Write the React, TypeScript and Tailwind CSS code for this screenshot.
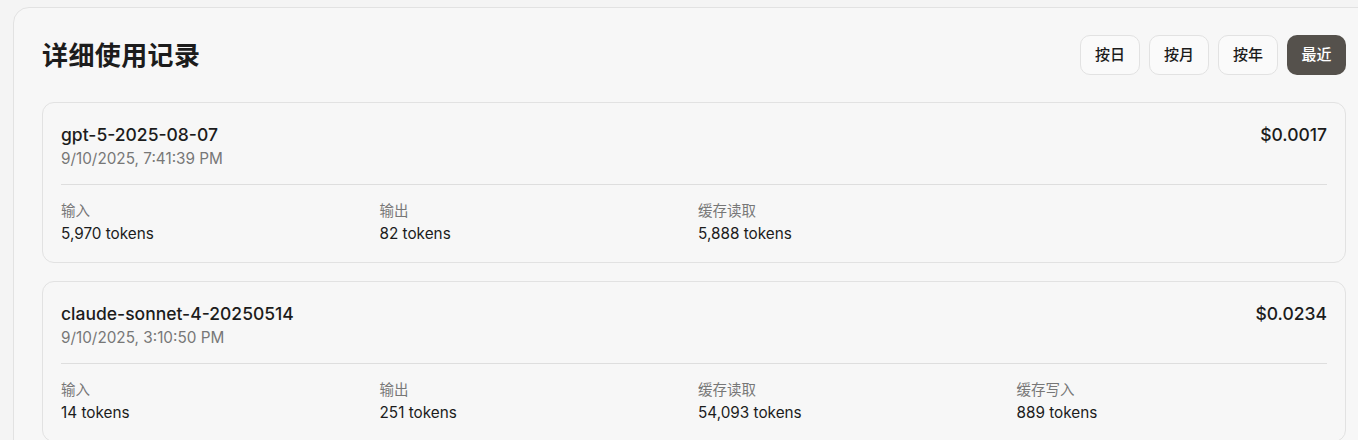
const records = [
  {
    model: "gpt-5-2025-08-07",
    time: "9/10/2025, 7:41:39 PM",
    cost: "$0.0017",
    stats: [
      { label: "输入", value: "5,970 tokens" },
      { label: "输出", value: "82 tokens" },
      { label: "缓存读取", value: "5,888 tokens" },
    ],
  },
  {
    model: "claude-sonnet-4-20250514",
    time: "9/10/2025, 3:10:50 PM",
    cost: "$0.0234",
    stats: [
      { label: "输入", value: "14 tokens" },
      { label: "输出", value: "251 tokens" },
      { label: "缓存读取", value: "54,093 tokens" },
      { label: "缓存写入", value: "889 tokens" },
    ],
  },
];

const ranges = ["按日", "按月", "按年", "最近"];

export default function App() {
  return (
    <div
      className="min-h-[440px] bg-[#f4f4f4] pt-[7px] pl-[13px] overflow-hidden"
      style={{ fontFamily: 'Inter, "Noto Sans CJK SC", sans-serif' }}
    >
      <div className="w-[1400px] rounded-tl-[16px] border border-[#e2e2e2] bg-[#f7f7f7] pl-[28px] pr-[66px] pt-[27px] pb-8 text-[#1c1c1c]">
        <div className="flex items-center justify-between">
          <h2 className="text-[26px] font-bold tracking-[0.4px]">详细使用记录</h2>
          <div className="flex gap-[9px]">
            {ranges.map((r) => (
              <button
                key={r}
                className={
                  r === "最近"
                    ? "h-10 w-[59px] rounded-[10px] bg-[#55514c] text-[15px] font-medium text-white"
                    : "h-10 w-[60px] rounded-[10px] border border-[#e2e2e2] bg-[#fafafa] text-[15px] font-medium text-[#1c1c1c]"
                }
              >
                {r}
              </button>
            ))}
          </div>
        </div>

        <div className="mt-[27px] flex flex-col gap-[18px]">
          {records.map((rec) => (
            <div
              key={rec.model}
              className="rounded-[12px] border border-[#e2e2e2] bg-[#f7f7f7] px-[18px] pt-[20px] pb-[17px]"
            >
              <div className="flex items-start justify-between">
                <div>
                  <div className="text-[17.5px] leading-[24px] font-medium">{rec.model}</div>
                  <div className="text-[15.3px] leading-[24px] text-[#777777]">{rec.time}</div>
                </div>
                <div className="text-[17.5px] leading-[24px] font-medium">{rec.cost}</div>
              </div>
              <div className="mt-[13px] border-t border-[#dedede]" />
              <div className="mt-[15px] grid grid-cols-4 gap-2">
                {rec.stats.map((s) => (
                  <div key={s.label}>
                    <div className="text-[14.5px] leading-[22px] text-[#777777]">{s.label}</div>
                    <div className="text-[15.3px] leading-[23px]">{s.value}</div>
                  </div>
                ))}
              </div>
            </div>
          ))}
        </div>
      </div>
    </div>
  );
}
